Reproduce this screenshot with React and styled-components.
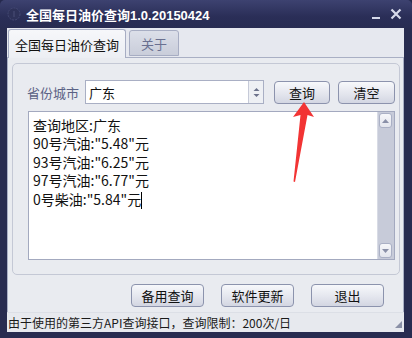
import React from 'react'
import styled, { createGlobalStyle } from 'styled-components'

const GlobalStyle = createGlobalStyle`
  html, body { margin: 0; padding: 0; background: #262a4e; }
  body { font-family: "Noto Sans CJK SC", "Noto Sans", sans-serif; }
  * { box-sizing: border-box; }
`

const lines = [
  '查询地区:广东',
  '90号汽油:"5.48"元',
  '93号汽油:"6.25"元',
  '97号汽油:"6.77"元',
  '0号柴油:"5.84"元',
]

function App() {
  return (
    <Window>
      <GlobalStyle />
      <TitleBar>
        <AppIcon>
          <svg width="14" height="14" viewBox="0 0 14 14">
            <circle cx="7" cy="7" r="6" fill="#2e3259" stroke="#474c76" strokeWidth="1" strokeDasharray="2 1" />
            <rect x="6" y="4" width="2" height="6" fill="#3c4068" />
          </svg>
        </AppIcon>
        <Title>全国每日油价查询<Version>1.0.20150424</Version></Title>
        <Controls>
          <svg width="10" height="12" viewBox="0 0 10 12">
            <rect x="1" y="9" width="8" height="2" fill="#d6d9ea" />
          </svg>
          <svg width="12" height="12" viewBox="0 0 12 12">
            <path d="M1.5 1.5 L10.5 10.5 M10.5 1.5 L1.5 10.5" stroke="#d6d9ea" strokeWidth="2.2" />
          </svg>
        </Controls>
      </TitleBar>
      <Client>
        <TabStrip>
          <Tab active>全国每日油价查询</Tab>
          <Tab>关于</Tab>
        </TabStrip>
        <Panel>
          <GroupBox>
            <QueryRow>
              <Label>省份城市</Label>
              <Combo>
                <ComboText>广东</ComboText>
                <Spinner>
                  <svg width="7" height="11" viewBox="0 0 7 11">
                    <path d="M0.5 4 L3.5 1 L6.5 4 Z M0.5 7 L3.5 10 L6.5 7 Z" fill="#6d738c" />
                  </svg>
                </Spinner>
              </Combo>
              <Button width={56}>查询</Button>
              <Button width={57}>清空</Button>
            </QueryRow>
            <TextBox>
              <TextContent>
                {lines.map((l, i) => (
                  <Line key={i}>
                    {l}
                    {i === lines.length - 1 && <Caret />}
                  </Line>
                ))}
              </TextContent>
              <ScrollBar>
                <ScrollButton>
                  <svg width="7" height="4" viewBox="0 0 7 4"><path d="M0 4 L3.5 0 L7 4 Z" fill="#8a90a8" /></svg>
                </ScrollButton>
                <ScrollButton>
                  <svg width="7" height="4" viewBox="0 0 7 4"><path d="M0 0 L3.5 4 L7 0 Z" fill="#8a90a8" /></svg>
                </ScrollButton>
              </ScrollBar>
            </TextBox>
          </GroupBox>
          <ActionRow>
            <Button width={73}>备用查询</Button>
            <Button width={73}>软件更新</Button>
            <Button width={73}>退出</Button>
          </ActionRow>
        </Panel>
        <StatusBar>
          由于使用的第三方API查询接口，查询限制：200次/日
          <Grip>
            <svg width="7" height="7" viewBox="0 0 7 7"><path d="M7 0 L7 7 L0 7 Z" fill="#8a90a6" /></svg>
          </Grip>
        </StatusBar>
      </Client>
      <Arrow width="412" height="338" viewBox="0 0 412 338">
        <path d="M304 102 L314 117 L307.5 115 L295 182 L293.5 181.5 L300.5 115 L293 117 Z" fill="#f23434" />
      </Arrow>
    </Window>
  )
}

export default App

const Window = styled.div`
  position: relative;
  width: 412px;
  height: 338px;
  background: #282c50;
  display: flex;
  flex-direction: column;
  border-radius: 5px 5px 0 0;
  overflow: hidden;
`

const TitleBar = styled.div`
  height: 28px;
  display: flex;
  align-items: center;
  padding: 0 10px 0 7px;
  background: linear-gradient(#3d4270, #2a2e57 60%, #282c52);
`

const AppIcon = styled.div`
  width: 14px;
  height: 14px;
  display: flex;
  margin-right: 5px;
`

const Title = styled.div`
  color: #ffffff;
  font-size: 13px;
  font-weight: bold;
  display: flex;
  align-items: baseline;
`

const Version = styled.span`
  font-family: "Liberation Sans", Arial, sans-serif;
  font-size: 13px;
  font-weight: bold;
`

const Controls = styled.div`
  margin-left: auto;
  display: flex;
  align-items: center;
  gap: 9px;
`

const Client = styled.div`
  flex: 1;
  margin: 0 8px 6px 7px;
  display: flex;
  flex-direction: column;
  background: #e6e8ef;
`

const TabStrip = styled.div`
  height: 29px;
  display: flex;
  align-items: flex-end;
  gap: 3px;
  padding-left: 1px;
  background: #e6e8ef;
`

const Tab = styled.div`
  height: ${p => (p.active ? '29px' : '26px')};
  margin-bottom: ${p => (p.active ? '-1px' : '1px')};
  padding: 0 ${p => (p.active ? '6px' : '11px')};
  display: flex;
  align-items: center;
  font-size: 13px;
  color: ${p => (p.active ? '#111' : '#6a7090')};
  background: ${p => (p.active ? 'linear-gradient(#f6f7fa, #eceef3)' : 'linear-gradient(#dcdfe9, #c9cdda)')};
  border: 1px solid #a7adc3;
  border-bottom: ${p => (p.active ? 'none' : '1px solid #a7adc3')};
  border-radius: 3px 3px 0 0;
  position: relative;
  z-index: ${p => (p.active ? 1 : 0)};
`

const Panel = styled.div`
  height: 255px;
  border: 1px solid #a9afc4;
  border-bottom: none;
  background: #e9ebf0;
  padding: 5px 3px 0 4px;
  display: flex;
  flex-direction: column;
`

const GroupBox = styled.div`
  border: 1px solid #c4c8d5;
  border-radius: 5px;
  padding: 16px 4px 14px 14px;
  display: flex;
  flex-direction: column;
  gap: 7px;
`

const QueryRow = styled.div`
  display: flex;
  align-items: center;
  height: 24px;
  & > div:nth-child(3) { margin-right: 8px; }
`

const Label = styled.div`
  flex: none;
  white-space: nowrap;
  font-size: 13px;
  color: #5b6285;
  width: 52px;
  margin-right: 6px;
`

const Combo = styled.div`
  flex: none;
  width: 179px;
  height: 24px;
  display: flex;
  border: 1px solid #a9afc4;
  background: #fff;
  margin-right: 10px;
`

const ComboText = styled.div`
  flex: 1;
  font-size: 13px;
  color: #111;
  padding-left: 3px;
  display: flex;
  align-items: center;
`

const Spinner = styled.div`
  width: 15px;
  border-left: 1px solid #c6cad8;
  background: #eef0f4;
  display: flex;
  align-items: center;
  justify-content: center;
`

const Button = styled.div`
  width: ${p => p.width}px;
  height: 23px;
  flex: none;
  margin-right: 9px;
  display: flex;
  align-items: center;
  justify-content: center;
  font-size: 13px;
  color: #111;
  border: 1px solid #8c93ad;
  border-radius: 4px;
  background: linear-gradient(#f7f8fb, #e4e6ee 55%, #d3d6e2);
  &:last-child { margin-right: 0; }
`

const TextBox = styled.div`
  margin-left: 1px;
  height: 149px;
  display: flex;
  border: 1px solid #a3a9bf;
  background: #fff;
`

const TextContent = styled.div`
  flex: 1;
  padding: 3.5px 0 0 4px;
  font-size: 14px;
  line-height: 18.6px;
  color: #111;
`

const Line = styled.div`
  white-space: pre;
`

const Caret = styled.span`
  display: inline-block;
  width: 1px;
  height: 17px;
  background: #000;
  vertical-align: -4px;
`

const ScrollBar = styled.div`
  width: 17px;
  padding: 1px 2px 1px 1px;
  background: #c7cbd9;
  border-left: 1px solid #d8dbe5;
  display: flex;
  flex-direction: column;
  justify-content: space-between;
`

const ScrollButton = styled.div`
  height: 15px;
  border: 1px solid #aab0c5;
  border-radius: 3px;
  background: linear-gradient(#f6f7fa, #e3e5ed);
  display: flex;
  align-items: center;
  justify-content: center;
`

const ActionRow = styled.div`
  display: flex;
  justify-content: flex-end;
  padding: 9px 16px 0 0;
  & > div { margin-right: 17px; }
  & > div:last-child { margin-right: 0; }
`

const StatusBar = styled.div`
  height: 20px;
  display: flex;
  align-items: center;
  padding-left: 1px;
  font-size: 12px;
  color: #1a1a1a;
  background: #e7e9ee;
  border-top: 1px solid #dcdfe6;
`

const Grip = styled.div`
  margin-left: auto;
  margin-right: 2px;
  margin-top: 4px;
  display: flex;
`

const Arrow = styled.svg`
  position: absolute;
  left: 0;
  top: 0;
  pointer-events: none;
`
